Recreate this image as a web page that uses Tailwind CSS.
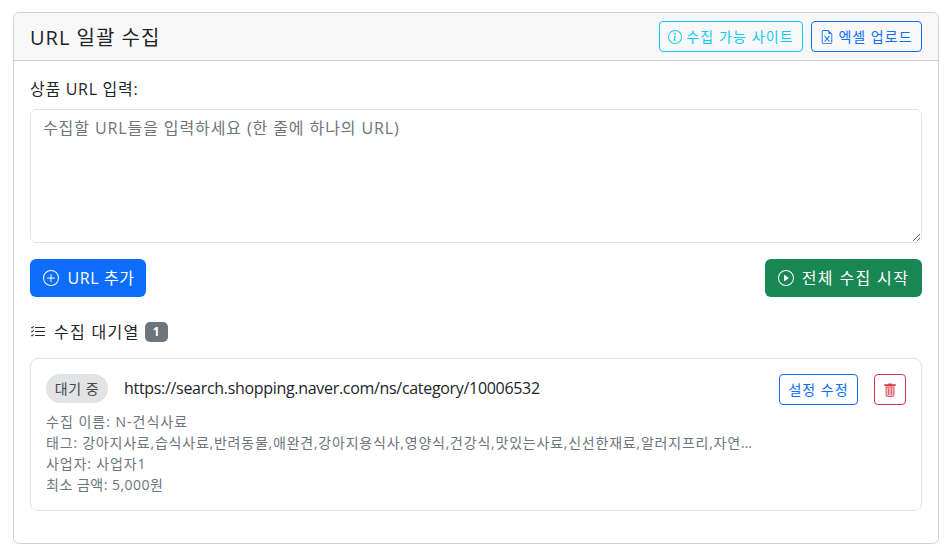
<!DOCTYPE html>
<html lang="ko"><head><meta charset="utf-8"><script src="https://cdn.jsdelivr.net/npm/@tailwindcss/browser@4"></script></head>
<body class="bg-white font-['Open_Sans','Noto_Sans_CJK_KR',sans-serif] text-[#212529]">
<div class="pt-3 pl-[13px] pr-2 pb-[10px]">
  <div class="w-[926px] h-[532px] border border-[#d0d0d1] rounded-md flex flex-col overflow-hidden">
    <div class="h-[48px] shrink-0 bg-[#f8f8f8] border-b border-[#d0d0d1] flex items-center justify-between pl-4 pr-4">
      <h5 class="text-[20px] leading-6 tracking-[1px] pt-[2px]">URL 일괄 수집</h5>
      <div class="flex gap-2">
        <button class="h-[31px] w-[144px] border border-[#0dcaf0] rounded text-[#0dcaf0] text-[14px] flex items-center justify-center gap-1">
          <svg class="w-[14px] h-[14px]" viewBox="0 0 16 16" fill="currentColor"><path d="M8 15A7 7 0 1 1 8 1a7 7 0 0 1 0 14m0 1A8 8 0 1 0 8 0a8 8 0 0 0 0 16"/><path d="m8.93 6.588-2.29.287-.082.38.45.083c.294.07.352.176.288.469l-.738 3.468c-.194.897.105 1.319.808 1.319.545 0 1.178-.252 1.465-.598l.088-.416c-.2.176-.492.246-.686.246-.275 0-.375-.193-.304-.533zM9 4.5a1 1 0 1 1-2 0 1 1 0 0 1 2 0"/></svg>
          <span class="tracking-[1.1px]">수집 가능 사이트</span></button>
        <button class="h-[31px] w-[111px] border border-[#0d6efd] rounded text-[#0d6efd] text-[14px] flex items-center justify-center gap-1">
          <svg class="w-[14px] h-[14px]" viewBox="0 0 16 16" fill="currentColor"><path d="M5.884 6.68a.5.5 0 1 0-.768.64L7.349 10l-2.233 2.68a.5.5 0 0 0 .768.64L8 10.781l2.116 2.54a.5.5 0 0 0 .768-.641L8.651 10l2.233-2.68a.5.5 0 0 0-.768-.64L8 9.219l-2.116-2.54z"/><path d="M14 14V4.5L9.500 0H4a2 2 0 0 0-2 2v12a2 2 0 0 0 2 2h8a2 2 0 0 0 2-2M9.500 3A1.500 1.500 0 0 0 11 4.500h2V14a1 1 0 0 1-1 1H4a1 1 0 0 1-1-1V2a1 1 0 0 1 1-1h5.500z"/></svg>
          <span class="tracking-[1px]">엑셀 업로드</span></button>
      </div>
    </div>
    <div class="p-4 flex-1 flex flex-col">
      <label class="text-[16px] leading-6 mb-2 tracking-[0.7px]">상품 URL 입력:</label>
      <textarea rows="5" placeholder="수집할 URL들을 입력하세요 (한 줄에 하나의 URL)" class="block w-full h-[134px] border border-[#dee2e6] rounded-md px-3 py-[6px] text-[16px] leading-6 tracking-[0.9px] placeholder:text-[#6c757d] outline-none"></textarea>
      <div class="flex justify-between mt-4">
        <button class="h-[38px] w-[116px] rounded-md bg-[#0d6efd] text-white text-[16px] flex items-center justify-center gap-2">
          <svg class="w-4 h-4 ml-[2px]" viewBox="0 0 16 16" fill="currentColor"><path d="M8 15A7 7 0 1 1 8 1a7 7 0 0 1 0 14m0 1A8 8 0 1 0 8 0a8 8 0 0 0 0 16"/><path d="M8 4a.5.5 0 0 1 .5.5v3h3a.5.5 0 0 1 0 1h-3v3a.5.5 0 0 1-1 0v-3h-3a.5.5 0 0 1 0-1h3v-3A.5.5 0 0 1 8 4"/></svg>
          <span class="tracking-[0.6px]">URL 추가</span></button>
        <button class="h-[38px] w-[157px] rounded-md bg-[#198754] text-white text-[16px] flex items-center justify-center gap-2">
          <svg class="w-4 h-4" viewBox="0 0 16 16" fill="currentColor"><path d="M8 15A7 7 0 1 1 8 1a7 7 0 0 1 0 14m0 1A8 8 0 1 0 8 0a8 8 0 0 0 0 16"/><path d="M6.271 5.055a.5.5 0 0 1 .52.038l3.5 2.5a.5.5 0 0 1 0 .814l-3.5 2.5A.5.5 0 0 1 6 10.5v-5a.5.5 0 0 1 .271-.445"/></svg>
          <span class="tracking-[1.35px]">전체 수집 시작</span></button>
      </div>
      <div class="flex items-center mt-[25px] h-5 text-[16px]">
        <svg class="w-4 h-4 mr-2" viewBox="0 0 16 16" fill="currentColor"><path fill-rule="evenodd" d="M5 11.5a.5.5 0 0 1 .5-.5h9a.5.5 0 0 1 0 1h-9a.5.5 0 0 1-.5-.5m0-4a.5.5 0 0 1 .5-.5h9a.5.5 0 0 1 0 1h-9a.5.5 0 0 1-.5-.5m0-4a.5.5 0 0 1 .5-.5h9a.5.5 0 0 1 0 1h-9a.5.5 0 0 1-.5-.5M3.854 2.146a.5.5 0 0 1 0 .708l-1.5 1.5a.5.5 0 0 1-.708 0l-.5-.5a.5.5 0 1 1 .708-.708L2 3.293l1.146-1.147a.5.5 0 0 1 .708 0m0 4a.5.5 0 0 1 0 .708l-1.5 1.5a.5.5 0 0 1-.708 0l-.5-.5a.5.5 0 1 1 .708-.708L2 7.293l1.146-1.147a.5.5 0 0 1 .708 0m0 4a.5.5 0 0 1 0 .708l-1.5 1.5a.5.5 0 0 1-.708 0l-.5-.5a.5.5 0 0 1 .708-.708l.146.147 1.146-1.147a.5.5 0 0 1 .708 0"/></svg>
        <span class="tracking-[1.3px]">수집 대기열</span>
        <span class="ml-[5px] w-[23px] h-[20px] rounded-[5px] bg-[#6c757d] text-white text-[12px] font-bold flex items-center justify-center">1</span>
      </div>
      <div class="mt-[16px] h-[153px] border border-[#dee2e6] rounded-[8px] p-[15px] flex flex-col">
        <div class="flex items-center justify-between h-[31px]">
          <div class="flex items-center">
            <span class="h-[29px] w-[62px] mb-[2px] rounded-full bg-[#e2e3e5] text-[#41464b] text-[14px] tracking-[0.6px] flex items-center justify-center">대기 중</span>
            <span class="ml-4 mb-[4px] text-[16px] tracking-[-0.31px]">https://search.shopping.naver.com/ns/category/10006532</span>
          </div>
          <div class="flex items-center gap-4">
            <button class="h-[31px] w-[79px] border border-[#0d6efd] rounded text-[#0d6efd] text-[14px] tracking-[1px]">설정 수정</button>
            <button class="h-[31px] w-[32px] border border-[#dc3545] rounded text-[#dc3545] flex items-center justify-center">
              <svg class="w-[14px] h-[14px]" viewBox="0 0 16 16"><path fill="currentColor" d="M6 .5h4v1h4.500v2h-13v-2H6z"/><path fill="currentColor" fill-opacity=".3" stroke="currentColor" stroke-width="1" d="M3.500 4.500h9V14a1.500 1.500 0 0 1-1.500 1.500H5A1.500 1.500 0 0 1 3.500 14z"/><path stroke="currentColor" stroke-width="1" d="M6.500 6v7.500M9.500 6v7.500"/></svg>
            </button>
          </div>
        </div>
        <div class="mt-[6px] text-[14px] leading-[21px] text-[#6c757d] tracking-[0.85px]">
          <div class="tracking-[1px]">수집 이름: N-건식사료</div>
          <div class="w-[709px] truncate tracking-[0.78px]">태그: 강아지사료,습식사료,반려동물,애완견,강아지용식사,영양식,건강식,맛있는사료,신선한재료,알러지프리,자연식,프리미엄</div>
          <div>사업자: 사업자1</div>
          <div class="tracking-[0.5px]">최소 금액: 5,000원</div>
        </div>
      </div>
    </div>
  </div>
</div>
</body></html>
